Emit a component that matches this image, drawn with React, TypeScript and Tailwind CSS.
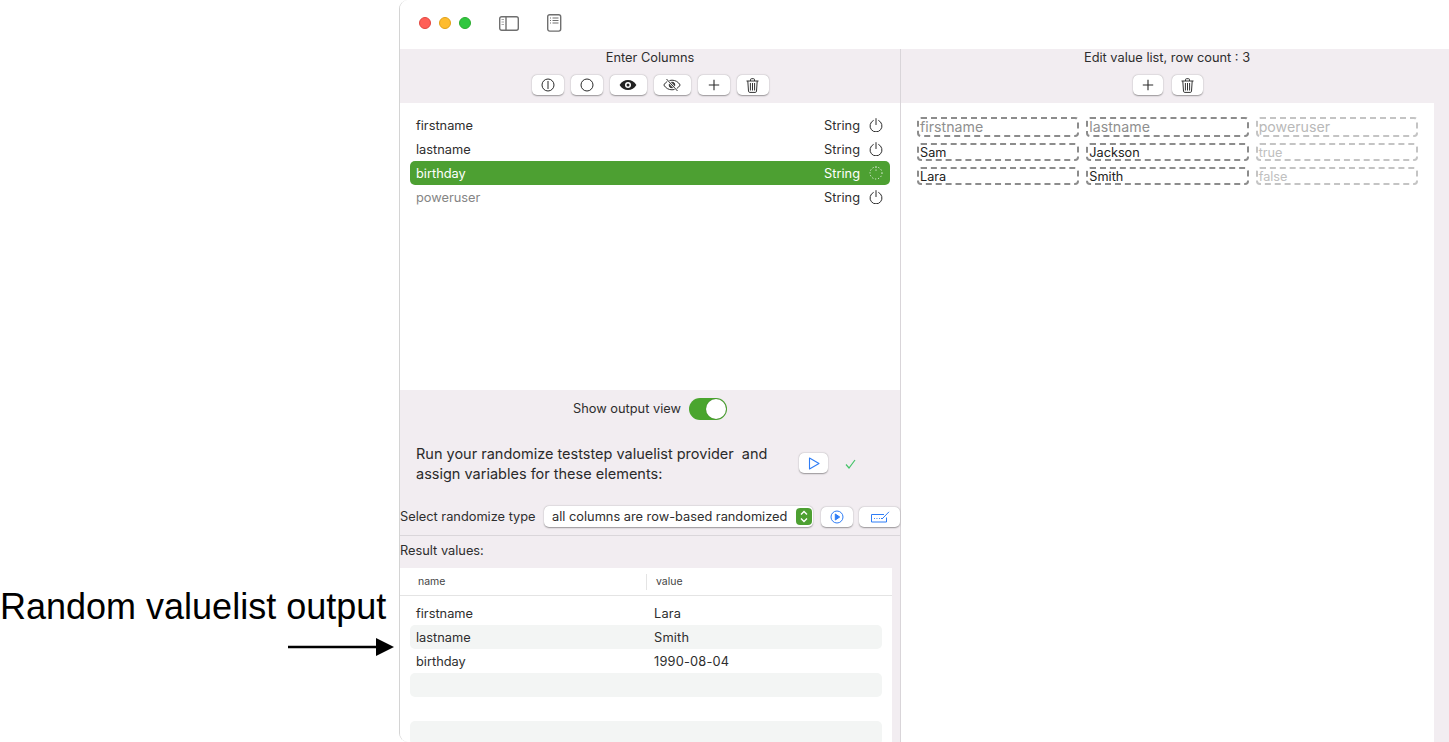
import React from "react";

const ui = "font-['Inter','Liberation_Sans',sans-serif]";

function ToolButton({ w, children }: { w: string; children: React.ReactNode }) {
  return (
    <div
      className={`${w} flex h-5 items-center justify-center rounded-[5px] bg-white shadow-[0_0.5px_1.5px_rgba(0,0,0,0.38)]`}
    >
      {children}
    </div>
  );
}

function InfoCircle() {
  return (
    <svg width="14" height="14" viewBox="0 0 14 14" fill="none" stroke="#2b2b2b" strokeWidth="1">
      <circle cx="7" cy="7" r="6" />
      <path d="M7 3v8" />
    </svg>
  );
}

function Ring() {
  return (
    <svg width="14" height="14" viewBox="0 0 14 14" fill="none" stroke="#2b2b2b" strokeWidth="1">
      <circle cx="7" cy="7" r="6" />
    </svg>
  );
}

function EyeFilled() {
  return (
    <svg width="18" height="12" viewBox="0 0 18 12">
      <path d="M0.6 6C2.6 2.6 5.6 1 9 1s6.400 1.600 8.400 5c-2 3.400-5 5-8.400 5S2.600 9.400.6 6z" fill="#222" />
      <circle cx="9" cy="6" r="3" fill="#fff" />
      <circle cx="9" cy="6" r="1.500" fill="#222" />
    </svg>
  );
}

function EyeOff() {
  return (
    <svg width="18" height="14" viewBox="0 0 18 14" fill="none" stroke="#333" strokeWidth="1">
      <path d="M0.800 7C2.700 3.800 5.700 2.200 9 2.200s6.300 1.600 8.200 4.800c-1.900 3.200-4.900 4.800-8.200 4.800S2.700 10.200.8 7z" />
      <circle cx="9" cy="7" r="2.800" fill="#555" />
      <path d="M3.500 1l11 12" stroke="#fff" strokeWidth="2.200" />
      <path d="M3.500 1l11 12" />
    </svg>
  );
}

function PlusIcon() {
  return (
    <svg width="12" height="12" viewBox="0 0 12 12" fill="none" stroke="#2b2b2b" strokeWidth="1.100">
      <path d="M6 .8v10.400M.8 6h10.400" />
    </svg>
  );
}

function TrashIcon() {
  return (
    <svg width="13" height="15" viewBox="0 0 13 15" fill="none" stroke="#333" strokeWidth="1">
      <path d="M.5 3h12M4.500 3V1.700q0-1 1-1h2q1 0 1 1V3" />
      <path d="M1.800 3l.7 10.200q.1 1.200 1.300 1.200h5.400q1.200 0 1.300-1.200L11.200 3" />
      <path d="M4.400 5v7.500M6.500 5v7.500M8.600 5v7.500" />
    </svg>
  );
}

function PowerIcon() {
  return (
    <svg width="14" height="14" viewBox="0 0 14 14" fill="none" stroke="#2b2b2b" strokeWidth="1">
      <path d="M4.300 2.500a6 6 0 1 0 5.400 0" strokeLinecap="round" />
      <path d="M7 .6v6" strokeLinecap="round" />
    </svg>
  );
}

function DottedPower() {
  return (
    <svg width="14" height="14" viewBox="0 0 14 14" fill="none" stroke="#fff" strokeWidth="1" strokeDasharray="1 2">
      <circle cx="7" cy="7" r="6" />
      <path d="M7 .6v6" />
    </svg>
  );
}

function ColumnRow({
  name,
  active,
  muted,
}: {
  name: string;
  active?: boolean;
  muted?: boolean;
}) {
  return (
    <div
      className={`flex h-6 items-center justify-between rounded-[5px] pl-1.5 pr-[7px] text-[12.8px] ${
        active ? "bg-[#4da032] text-white" : "text-[#2e2e2e]"
      }`}
    >
      <span className={`pt-[2px] ${muted ? "text-[#858585]" : ""}`}>{name}</span>
      <span className="flex items-center gap-[9px]">
        <span className="pt-[2px]">String</span>
        {active ? <DottedPower /> : <PowerIcon />}
      </span>
    </div>
  );
}

function ValueCell({ text, tone, tall }: { text: string; tone: string; tall?: boolean }) {
  return (
    <div
      className={`flex items-center overflow-hidden rounded-[4px] border-2 border-dashed pl-[1px] ${
        tall ? "h-5 pb-[1px] text-[14.2px]" : "h-[18px] pt-[1px] text-[12.7px]"
      } ${tone}`}
    >
      {text}
    </div>
  );
}

function ResultRow({ name, value, shaded }: { name: string; value?: string; shaded?: boolean }) {
  return (
    <div className={`flex h-6 shrink-0 items-center rounded-[5px] pt-[1px] text-[12.8px] text-[#2e2e2e] ${shaded ? "bg-[#f3f5f4]" : ""}`}>
      <span className="w-[244px] pl-1.5">{name}</span>
      <span className="tracking-[0.2px]">{value}</span>
    </div>
  );
}

export default function App() {
  return (
    <div className={`flex h-[742px] w-[1449px] overflow-hidden bg-white ${ui}`}>
      {/* annotation on the left of the window */}
      <div className="flex w-[399px] shrink-0 flex-col items-end pt-[587px]">
        <div className="w-full font-['Liberation_Sans',sans-serif] text-[36px] leading-[40px] text-black">
          Random valuelist output
        </div>
        <svg width="106" height="20" viewBox="0 0 106 20" className="mr-[5px] mt-[10px]">
          <path d="M0 10h90" stroke="#000" strokeWidth="2.500" />
          <path d="M88 1l18 9-18 9z" fill="#000" />
        </svg>
      </div>

      {/* app window */}
      <div className="flex min-w-0 flex-1 flex-col overflow-hidden rounded-l-[9px] border-l border-[#d4d4d4]">
        <div className="flex h-[49px] shrink-0 items-center bg-white pb-[3px] pl-[19px]">
          <div className="h-3 w-3 rounded-full border-[0.5px] border-[#e2463f] bg-[#ff5f57]" />
          <div className="ml-2 h-3 w-3 rounded-full border-[0.5px] border-[#e1a116] bg-[#febc2e]" />
          <div className="ml-2 h-3 w-3 rounded-full border-[0.5px] border-[#2aac2f] bg-[#30c73f]" />
          <svg width="20" height="15" viewBox="0 0 20 15" fill="none" stroke="#6f6f6f" className="ml-[28px]">
            <rect x=".7" y=".7" width="18.600" height="13.600" rx="2" strokeWidth="1.400" />
            <path d="M7 .6v13.800" strokeWidth="1.400" />
            <path d="M2.500 3.500h2.500M2.500 6h2.500M2.500 8.500h2.500" stroke="#aaa" strokeWidth="1.200" />
          </svg>
          <svg width="15" height="18" viewBox="0 0 15 18" fill="none" stroke="#6f6f6f" className="ml-[28px]">
            <rect x=".7" y=".7" width="13" height="16.400" rx="2" strokeWidth="1.400" />
            <path d="M5.500 4h6M5.500 6.500h6M5.500 9h6" strokeWidth="1" />
            <path d="M3 4h1M3 6.500h1M3 9h1" strokeWidth="1" />
          </svg>
        </div>

        <div className="flex min-h-0 flex-1">
          {/* left pane */}
          <div className="flex w-[501px] shrink-0 flex-col border-r border-[#d9d5d9] bg-[#f2edf1]">
            <div className="flex h-[54px] shrink-0 flex-col items-center">
              <div className="mt-[1px] h-4 text-[12.8px] leading-4 text-[#2e2e2e]">Enter Columns</div>
              <div className="mt-[9px] flex gap-[7px]">
                <ToolButton w="w-8"><InfoCircle /></ToolButton>
                <ToolButton w="w-8"><Ring /></ToolButton>
                <ToolButton w="w-[37px]"><EyeFilled /></ToolButton>
                <ToolButton w="w-[37px]"><EyeOff /></ToolButton>
                <ToolButton w="w-8"><PlusIcon /></ToolButton>
                <ToolButton w="w-8"><TrashIcon /></ToolButton>
              </div>
            </div>

            <div className="h-[287px] shrink-0 bg-white px-2.5 pt-2.5">
              <ColumnRow name="firstname" />
              <ColumnRow name="lastname" />
              <ColumnRow name="birthday" active />
              <ColumnRow name="poweruser" muted />
            </div>

            <div className="mt-2 flex h-[22px] shrink-0 items-center justify-center gap-2 text-[12.8px] text-[#2e2e2e]">
              Show output view
              <div className="flex h-[22px] w-[38px] items-center justify-end rounded-full bg-[#4aa52e] pr-[1px]">
                <div className="h-5 w-5 rounded-full bg-white shadow-[0_0_1px_rgba(0,0,0,0.4)]" />
              </div>
            </div>

            <div className="mt-[23px] flex h-10 shrink-0 items-center pl-4">
              <div className="w-[382px] whitespace-pre pt-[2px] text-[14.5px] leading-5 text-[#2a2a2a]">
                {"Run your randomize teststep valuelist provider  and\nassign variables for these elements:"}
              </div>
              <div className="ml-[1px]">
                <ToolButton w="w-[29px]">
                  <svg width="12" height="13" viewBox="0 0 12 13" fill="none" stroke="#2f7df6" strokeWidth="1.100">
                    <path d="M1.500 1v11L11 6.500z" strokeLinejoin="round" />
                  </svg>
                </ToolButton>
              </div>
              <svg width="11" height="10" viewBox="0 0 11 10" fill="none" stroke="#46c46a" strokeWidth="1.200" className="ml-[17px] mt-[1px]">
                <path d="M1 5.500L4 9l6-8" />
              </svg>
            </div>

            <div className="mt-[23px] flex h-[21px] shrink-0 items-center text-[12.8px] text-[#2e2e2e]">
              <span className="w-[144px]">Select randomize type</span>
              <div className="flex h-[21px] w-[269px] items-center justify-between rounded-[5px] bg-white pl-2 pr-[1px] shadow-[0_0.5px_1.5px_rgba(0,0,0,0.38)]">
                <span>all columns are row-based randomized</span>
                <div className="flex h-[17px] w-4 items-center justify-center rounded-[4px] bg-[#4da032]">
                  <svg width="8" height="13" viewBox="0 0 8 13" fill="none" stroke="#fff" strokeWidth="1.400">
                    <path d="M1 4.500l3-3 3 3M1 8.500l3 3 3-3" />
                  </svg>
                </div>
              </div>
              <div className="ml-[8px]">
                <ToolButton w="w-8">
                  <svg width="14" height="14" viewBox="0 0 14 14" fill="none" stroke="#2f7df6" strokeWidth="1">
                    <circle cx="7" cy="7" r="6" />
                    <path d="M5.300 4l4.400 3-4.400 3z" fill="#2f7df6" />
                  </svg>
                </ToolButton>
              </div>
              <div className="ml-[6px]">
                <ToolButton w="w-[41px]">
                  <svg width="20" height="12" viewBox="0 0 20 12" fill="none" stroke="#2f7df6" strokeWidth="1">
                    <path d="M14 3.500H1.500v7.500h15V6.500" />
                    <path d="M4 7.500h.9M6.500 7.500h.9M9 7.500h.9M11 7.500h2" />
                    <path d="M12.500 7.500L19 .8" />
                  </svg>
                </ToolButton>
              </div>
            </div>

            <div className="mt-[8px] h-px shrink-0 bg-[#dad6da]" />
            <div className="flex h-[32px] shrink-0 items-center pb-[2px] text-[12.8px] text-[#2e2e2e]">Result values:</div>

            <div className="mr-2 flex min-h-0 flex-1 flex-col overflow-hidden bg-white">
              <div className="flex h-7 shrink-0 items-center border-b border-[#e4e4e4] pt-[1px] text-[10.5px] text-[#444]">
                <span className="w-[246px] pl-[18px]">name</span>
                <span className="flex h-[16px] items-center border-l border-[#e4e4e4] pl-[9px]">value</span>
              </div>
              <div className="flex flex-col px-2.5 pt-[5px]">
                <ResultRow name="firstname" value="Lara" />
                <ResultRow name="lastname" value="Smith" shaded />
                <ResultRow name="birthday" value="1990-08-04" />
                <ResultRow name="" shaded />
                <ResultRow name="" />
                <ResultRow name="" shaded />
              </div>
            </div>
          </div>

          {/* right pane */}
          <div className="flex min-w-0 flex-1 flex-col bg-[#f2edf1]">
            <div className="flex h-[54px] shrink-0 flex-col items-center pr-[16px]">
              <div className="mt-[1px] h-4 text-[12.8px] leading-4 text-[#2e2e2e]">Edit value list, row count : 3</div>
              <div className="ml-[2px] mt-[9px] flex gap-[9px]">
                <ToolButton w="w-[30px]"><PlusIcon /></ToolButton>
                <ToolButton w="w-[31px]"><TrashIcon /></ToolButton>
              </div>
            </div>
            <div className="mr-[15px] flex-1 bg-white pl-4 pr-[16px] pt-[14px]">
              <div className="grid grid-cols-3 gap-x-[7px] gap-y-[6px]">
                <ValueCell tall text="firstname" tone="border-[#8c8c8c] text-[#8f8f8f]" />
                <ValueCell tall text="lastname" tone="border-[#8c8c8c] text-[#8f8f8f]" />
                <ValueCell tall text="poweruser" tone="border-[#c4c4c4] text-[#b9b9b9]" />
                <ValueCell text="Sam" tone="border-[#8c8c8c] text-[#222]" />
                <ValueCell text="Jackson" tone="border-[#8c8c8c] text-[#222]" />
                <ValueCell text="true" tone="border-[#c4c4c4] text-[#c0c0c0]" />
                <ValueCell text="Lara" tone="border-[#8c8c8c] text-[#222]" />
                <ValueCell text="Smith" tone="border-[#8c8c8c] text-[#222]" />
                <ValueCell text="false" tone="border-[#c4c4c4] text-[#c0c0c0]" />
              </div>
            </div>
          </div>
        </div>
      </div>
    </div>
  );
}
